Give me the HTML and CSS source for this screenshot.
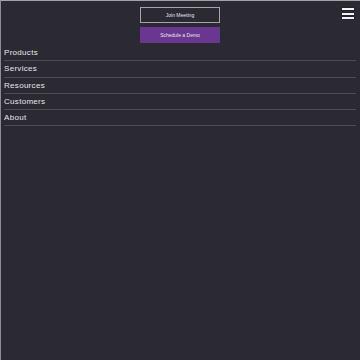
FILE: index.html
```html
<!DOCTYPE html>
<html lang="en">
<head>
<meta charset="utf-8">
<title>Menu</title>
<link rel="stylesheet" href="styles.css">
</head>
<body>
<header class="top">
  <a class="btn btn-outline" href="#">Join Meeting</a>
  <a class="btn btn-primary" href="#">Schedule a Demo</a>
  <button class="burger" aria-label="Menu">
    <span></span><span></span><span></span>
  </button>
</header>
<nav class="menu">
  <a class="item" href="#">Products</a>
  <a class="item" href="#">Services</a>
  <a class="item" href="#">Resources</a>
  <a class="item" href="#">Customers</a>
  <a class="item" href="#">About</a>
</nav>
</body>
</html>
```
FILE: styles.css
```css
html, body {
  margin: 0;
  padding: 0;
}
body {
  min-height: 100vh;
  box-sizing: border-box;
  background: #2b2a33;
  border-top: 1px solid #a3a3a6;
  border-left: 1px solid #8e8e92;
  font-family: "Liberation Sans", Arial, sans-serif;
  color: #ececec;
  position: relative;
}
.top {
  display: flex;
  flex-direction: column;
  align-items: center;
  gap: 4px;
  padding-top: 6px;
  padding-bottom: 2px;
}
.btn {
  box-sizing: border-box;
  width: 80px;
  height: 16px;
  display: flex;
  align-items: center;
  justify-content: center;
  font-size: 5px;
  color: #e8e8e8;
  text-decoration: none;
  margin-left: -1px;
}
.btn-outline {
  border: 1px solid #a6a6a8;
}
.btn-primary {
  background: #6a3790;
}
.burger {
  position: absolute;
  top: 7px;
  right: 6px;
  width: 12px;
  height: 11px;
  padding: 0;
  border: 0;
  background: transparent;
  display: flex;
  flex-direction: column;
  justify-content: space-between;
}
.burger span {
  display: block;
  height: 2px;
  background: #f2f2f2;
  box-shadow: 0 0 0 0.5px #1a1a1f;
}
.menu {
  display: flex;
  flex-direction: column;
  padding: 0 4px 0 3px;
}
.item {
  height: 15.25px;
  display: flex;
  align-items: center;
  font-size: 8px;
  letter-spacing: 0.3px;
  color: #e6e6e6;
  text-decoration: none;
  border-bottom: 1px solid #4d4c56;
}
```
